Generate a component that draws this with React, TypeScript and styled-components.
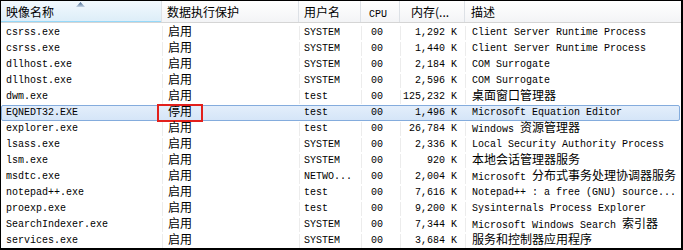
import React from "react";
import styled, { createGlobalStyle } from "styled-components";

type Proc = {
  name: string;
  dep: string;
  user: string;
  cpu: string;
  mem: string;
  desc: string;
};

const GlobalStyle = createGlobalStyle`
  html, body {
    margin: 0;
    padding: 0;
    background: #ffffff;
  }
`;

const COLS = "161px 137px 62px 39px 65px 1fr";

const Frame = styled.div`
  width: 683px;
  height: 250px;
  box-sizing: border-box;
  border-style: solid;
  border-color: #000000;
  border-width: 1px 2px 2px 1px;
  background: #ffffff;
  overflow: hidden;
  font-family: "Liberation Mono", "Noto Sans CJK SC", monospace;
  font-size: 10px;
  color: #000000;
`;

const Header = styled.div`
  display: grid;
  grid-template-columns: ${COLS};
  height: 22px;
  box-sizing: border-box;
  border-bottom: 1px solid #d5d5d5;
  background: linear-gradient(#ffffff, #f3f4f6);
`;

const HeadCell = styled.div<{ $sorted?: boolean; $pad?: number; $last?: boolean }>`
  position: relative;
  display: block;
  line-height: 21px;
  padding-left: ${(p) => p.$pad ?? 5}px;
  border-right: 1px solid ${(p) => (p.$last ? "transparent" : "#dde1e6")};
  white-space: nowrap;
  overflow: hidden;
  font-family: "Noto Sans CJK SC", "Liberation Mono", sans-serif;
  font-size: 12px;
  background: ${(p) =>
    p.$sorted ? "linear-gradient(#f2f9fe, #dcedf8)" : "transparent"};
  box-shadow: ${(p) => (p.$sorted ? "inset 0 -1px 0 #96d9f9" : "none")};
`;

const Mono = styled.span`
  font-family: "Liberation Mono", monospace;
  font-size: 10px;
`;

const SortArrow = styled.svg`
  position: absolute;
  top: 1px;
  left: 75px;
`;

const Body = styled.div`
  padding-top: 2px;
`;

const Row = styled.div<{ $selected?: boolean }>`
  display: grid;
  grid-template-columns: ${COLS};
  height: 16px;
  box-sizing: border-box;
  border: 1px solid ${(p) => (p.$selected ? "#84acdd" : "transparent")};
  border-radius: 2px;
  background: ${(p) =>
    p.$selected ? "linear-gradient(#e3eefb, #d5e5f8)" : "transparent"};
  margin-right: 1px;
`;

const Cell = styled.div<{ $pad?: number; $right?: boolean; $line?: boolean; $open?: boolean }>`
  position: relative;
  display: block;
  height: 14px;
  line-height: 14px;
  text-align: ${(p) => (p.$right ? "right" : "left")};
  padding: ${(p) => (p.$right ? "0 8px 0 0" : `0 0 0 ${p.$pad ?? 5}px`)};
  border-right: 1px solid ${(p) => (p.$line ? "#ececec" : "transparent")};
  white-space: pre;
  overflow: ${(p) => (p.$open ? "visible" : "hidden")};
`;

const Han = styled.span`
  font-family: "Noto Sans CJK SC", sans-serif;
  font-size: 12px;
  line-height: 10px;
`;

const Flag = styled.span`
  position: absolute;
  left: -6px;
  top: -2px;
  width: 46px;
  height: 18px;
  box-sizing: border-box;
  border: 2px solid #e2201c;
`;

const rows: Proc[] = [
  { name: "csrss.exe", dep: "启用", user: "SYSTEM", cpu: "00", mem: "1,292 K", desc: "Client Server Runtime Process" },
  { name: "csrss.exe", dep: "启用", user: "SYSTEM", cpu: "00", mem: "1,440 K", desc: "Client Server Runtime Process" },
  { name: "dllhost.exe", dep: "启用", user: "SYSTEM", cpu: "00", mem: "2,184 K", desc: "COM Surrogate" },
  { name: "dllhost.exe", dep: "启用", user: "SYSTEM", cpu: "00", mem: "2,596 K", desc: "COM Surrogate" },
  { name: "dwm.exe", dep: "启用", user: "test", cpu: "00", mem: "125,232 K", desc: "桌面窗口管理器" },
  { name: "EQNEDT32.EXE", dep: "停用", user: "test", cpu: "00", mem: "1,496 K", desc: "Microsoft Equation Editor" },
  { name: "explorer.exe", dep: "启用", user: "test", cpu: "00", mem: "26,784 K", desc: "Windows 资源管理器" },
  { name: "lsass.exe", dep: "启用", user: "SYSTEM", cpu: "00", mem: "2,336 K", desc: "Local Security Authority Process" },
  { name: "lsm.exe", dep: "启用", user: "SYSTEM", cpu: "00", mem: "920 K", desc: "本地会话管理器服务" },
  { name: "msdtc.exe", dep: "启用", user: "NETWO...", cpu: "00", mem: "2,004 K", desc: "Microsoft 分布式事务处理协调器服务" },
  { name: "notepad++.exe", dep: "启用", user: "test", cpu: "00", mem: "7,616 K", desc: "Notepad++ : a free (GNU) source..." },
  { name: "proexp.exe", dep: "启用", user: "test", cpu: "00", mem: "9,200 K", desc: "Sysinternals Process Explorer" },
  { name: "SearchIndexer.exe", dep: "启用", user: "SYSTEM", cpu: "00", mem: "7,344 K", desc: "Microsoft Windows Search 索引器" },
  { name: "services.exe", dep: "启用", user: "SYSTEM", cpu: "00", mem: "3,684 K", desc: "服务和控制器应用程序" },
];

// wrap runs of CJK characters so they get the larger CJK face
function mixed(text: string) {
  return text.split(/([\u3000-\u9fff\uff00-\uffef]+)/).map((part, i) =>
    /[\u3000-\u9fff\uff00-\uffef]/.test(part) ? <Han key={i}>{part}</Han> : part
  );
}

export default function App() {
  return (
    <>
      <GlobalStyle />
      <Frame>
        <Header>
          <HeadCell $sorted>
            <SortArrow width="9" height="5" viewBox="0 0 9 5">
              <defs>
                <linearGradient id="arr" x1="0" y1="0" x2="0" y2="1">
                  <stop offset="0" stopColor="#3c5e87" />
                  <stop offset="1" stopColor="#c4d5e6" />
                </linearGradient>
              </defs>
              <path d="M4.5 0 L9 5 L0 5 Z" fill="url(#arr)" />
            </SortArrow>
            映像名称
          </HeadCell>
          <HeadCell>数据执行保护</HeadCell>
          <HeadCell>用户名</HeadCell>
          <HeadCell $pad={8}>
            <Mono>CPU</Mono>
          </HeadCell>
          <HeadCell $pad={11}>内存(...</HeadCell>
          <HeadCell $pad={6} $last>
            描述
          </HeadCell>
        </Header>
        <Body>
          {rows.map((r, i) => {
            const sel = r.dep === "停用";
            return (
              <Row key={i} $selected={sel}>
                <Cell $pad={4} $line={!sel}>{r.name}</Cell>
                <Cell $pad={5} $line={!sel} $open>
                  <Han>{r.dep}</Han>
                  {sel && <Flag />}
                </Cell>
                <Cell $pad={4} $line={!sel}>{r.user}</Cell>
                <Cell $pad={9} $line={!sel}>{r.cpu}</Cell>
                <Cell $right $line={!sel}>{r.mem}</Cell>
                <Cell $pad={6} $open>{mixed(r.desc)}</Cell>
              </Row>
            );
          })}
        </Body>
      </Frame>
    </>
  );
}
